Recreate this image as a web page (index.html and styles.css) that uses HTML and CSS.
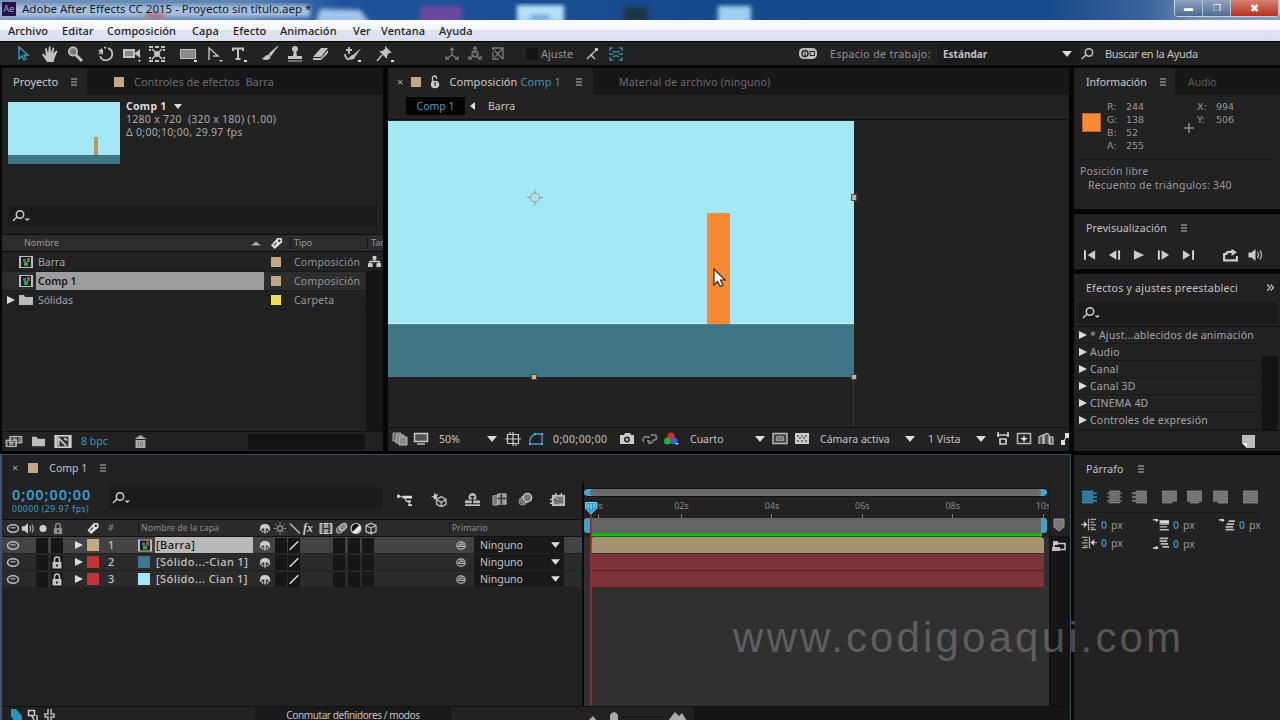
FILE: index.html
```html
<!DOCTYPE html>
<html lang="es">
<head>
  <meta charset="UTF-8">
  <title>Adobe After Effects CC 2015</title>
  <link rel="stylesheet" href="styles.css">
</head>
<body>
  <!-- Icons -->
  <svg width="0" height="0" class="sprite">
    <symbol id="arrow" viewBox="0 0 18 18"><path d="M5 2v12l3-3 2 4 2-1-2-4h4z" fill="none" stroke="#3d9fd0" stroke-width="1.3"/></symbol>
    <symbol id="hand" viewBox="0 0 18 18"><path d="M6 17 1 9.500l1.200-1 2.800 2.500L4 3.500l1.500-.5 1.500 5L8 1.500h1.500L10 8l1.800-5.500 1.500.5-1 5.800 3-3.300 1.200.8L14 12l-1.500 5z" fill="currentColor"/></symbol>
    <symbol id="mag" viewBox="0 0 18 18"><circle cx="7" cy="6.500" r="4.200" fill="#777" stroke="currentColor" stroke-width="1.700"/><path d="m10 10 6 6" stroke="currentColor" stroke-width="3"/></symbol>
    <symbol id="rotate" viewBox="0 0 18 18"><circle cx="9" cy="9" r="6.300" fill="none" stroke="currentColor" stroke-width="1.800" stroke-dasharray="17 2 2 2 2 2 2 2"/><path d="M1 5h5v5z" fill="currentColor"/></symbol>
    <symbol id="camera" viewBox="0 0 18 18"><path d="M0 4h12v9H0zm12 4 5-4v9l-5-4z" fill="currentColor"/><path d="M2 6h8v5H2z" fill="#888"/><path d="M15 15h3l-1.500 2z" fill="#ddd"/></symbol>
    <symbol id="behind" viewBox="0 0 18 18"><path d="M1 2h4M7 2h4M13 2h4M1 16h4M7 16h4M13 16h4M2 4v2M16 4v2M2 12v2M16 12v2" stroke="currentColor" stroke-width="2"/><path d="m4 4 3 3m7-3-3 3M4 14l3-3m7 3-3-3" stroke="currentColor" stroke-width="1.500"/><circle cx="9" cy="9" r="3" fill="currentColor"/></symbol>
    <symbol id="rect" viewBox="0 0 18 18"><path d="M1.500 4.500h15v9h-15z" fill="#888" stroke="currentColor"/><path d="M15 15h3v2h-3z" fill="#ddd"/></symbol>
    <symbol id="pen" viewBox="0 0 18 18"><path d="M4 15V3l9 8-5 0" fill="none" stroke="currentColor" stroke-width="1.400"/><path d="M14 15h4l-2 2z" fill="#ddd"/></symbol>
    <symbol id="type" viewBox="0 0 18 18"><path d="M4 6V3.500h10V6M9 4v10M6.500 14h5" fill="none" stroke="currentColor" stroke-width="2"/><path d="M15 15h3v2h-3z" fill="#ddd"/></symbol>
    <symbol id="brush" viewBox="0 0 18 18"><path d="m17 1-9 8 1.500 2z" fill="currentColor" stroke="currentColor"/><path d="M8 10c-3-1-4 2-7 4 4 2 9 1 8.500-2.500z" fill="currentColor"/></symbol>
    <symbol id="stamp" viewBox="0 0 18 18"><circle cx="9" cy="4" r="3" fill="currentColor"/><path d="M8 6h2l1 5h5v3H2v-3h5z" fill="currentColor"/><path d="M2 16h14" stroke="currentColor"/></symbol>
    <symbol id="eraser" viewBox="0 0 18 18"><path d="m1 12 8-9h7l-7 9zM1 13h8l7-8v3l-7 7H1z" fill="currentColor"/></symbol>
    <symbol id="roto" viewBox="0 0 18 18"><path d="m18 3-8 7c-2 0-3 2-5 4 3 1 6 1 7-2z" fill="currentColor"/><path d="M6 2v7M3 5h6M2 9c0 4 2 5 4 6" fill="none" stroke="currentColor" stroke-width="1.800"/><path d="M15 15h3v2h-3z" fill="#ddd"/></symbol>
    <symbol id="pin" viewBox="0 0 18 18"><path d="m9 1 7 7-3 0-2 3v3l-8-8h3l3-2z" fill="currentColor"/><path d="m6 10-5 6" stroke="currentColor" stroke-width="1.500"/><path d="M15 15h3v2h-3z" fill="#ddd"/></symbol>
    <symbol id="axis" viewBox="0 0 18 18"><path d="M9 10V3M9 10l-6 4M9 10l6 4M7 5l2-2 2 2M3 11v3h3M15 11v3h-3" fill="none" stroke="currentColor" stroke-width="1.400"/></symbol>
    <symbol id="axis2" viewBox="0 0 18 18"><path d="M9 9V2M8 10l-5 4M10 10l5 4M7 4l2-2 2 2M3 11v3h3M15 11v3h-3" fill="none" stroke="currentColor" stroke-width="1.400"/><circle cx="9" cy="9" r="3" fill="none" stroke="currentColor" stroke-width="1.500"/></symbol>
    <symbol id="axis3" viewBox="0 0 18 18"><path d="M3 3h11v11M3 3l11 11M14 3 6 12M4 7v7h6" fill="none" stroke="currentColor" stroke-width="1.400"/></symbol>
    <symbol id="snap" viewBox="0 0 18 18"><path d="m4 14 4-4 4 4M8 10l5-5" fill="none" stroke="currentColor" stroke-width="1.400"/><path d="M12 3h3v3h-3z" fill="currentColor"/></symbol>
    <symbol id="corners" viewBox="0 0 18 18"><path d="M3 6V3h3M12 3h3v3M3 12v3h3M15 12v3h-3M6 6l1 1h4l1-1M6 12l1-1h4l1 1M2 9h4M12 9h4" fill="none" stroke="currentColor" stroke-width="1.300"/></symbol>
    <symbol id="cloud" viewBox="0 0 18 14"><rect y="1" width="18" height="11" rx="4.500" fill="#bbb"/><circle cx="6" cy="6.500" r="3" fill="none" stroke="#222" stroke-width="1.300"/><path d="M11 4.500h4.500v4H11zM6 5v4" fill="none" stroke="#222"/></symbol>
    <symbol id="search" viewBox="0 0 18 14"><circle cx="9" cy="5.500" r="3.700" fill="none" stroke="currentColor" stroke-width="1.500"/><path d="m6 8-4.500 4" stroke="currentColor" stroke-width="1.500"/></symbol>
    <symbol id="searchm" viewBox="0 0 18 14"><circle cx="8" cy="5.500" r="3.700" fill="none" stroke="currentColor" stroke-width="1.500"/><path d="M5 8 1 12" stroke="currentColor" stroke-width="1.500"/><path d="M12.500 9.500H18l-2.700 2.500z" fill="currentColor"/></symbol>
    <symbol id="down" viewBox="0 0 10 6"><path d="M0 0h10L5 6z" fill="#ddd"/></symbol>
    <symbol id="right" viewBox="0 0 8 8"><path d="M0 0v8l8-4z" fill="#ddd"/></symbol>
    <symbol id="menu" viewBox="0 0 8 8"><path d="M1 1h6M1 4h6M1 7h6" stroke="#bbb" stroke-width="1.200"/></symbol>
    <symbol id="padlock" viewBox="0 0 12 14"><path d="M1.500 6.500h9V13h-9z" fill="currentColor"/><path d="M3.500 7V4a2.300 2.300 0 0 1 5 0v3" fill="none" stroke="currentColor" stroke-width="1.500"/><path d="M5 9h2v2H5z" fill="#222"/></symbol>
    <symbol id="unlock" viewBox="0 0 12 14"><ellipse cx="6" cy="9.500" rx="4.200" ry="3.800" fill="currentColor"/><path d="M3.500 8V3a2 2 0 0 1 4 0v1" fill="none" stroke="currentColor" stroke-width="1.300"/><path d="M5.500 7h1.200v4H5.500z" fill="#222"/></symbol>
    <symbol id="tag" viewBox="0 0 14 14"><path d="m1 9 7-8h4l1 1v4l-8 7z" fill="#ddd"/><circle cx="10" cy="4" r="1.300" fill="#222"/><path d="m4 9 3-3" stroke="#333" stroke-width="1.200"/></symbol>
    <symbol id="comp" viewBox="0 0 14 12"><path d="M0 0h14v12H0z" fill="#bbb"/><path d="M2 1h10v10H2z" fill="#18201c"/><path d="M4 3h3v3H4z" fill="#3572b4"/><path d="M8 2h3v4H8z" fill="#b5533a"/><path d="M5 6h4v4H5z" fill="#3c9f43"/></symbol>
    <symbol id="folder" viewBox="0 0 14 12"><path d="M0 1h5l1 2h8v8H0z" fill="#bbb"/></symbol>
    <symbol id="tree" viewBox="0 0 14 14"><path d="M5 1h4v4H5zM0 9h5v4H0zM9 9h5v4H9z" fill="#ccc"/><path d="M7 4v3M2 10V7h10v3" fill="none" stroke="#ccc" stroke-width="1.500"/></symbol>
    <symbol id="footage" viewBox="0 0 18 14"><path d="M4.500 1.500h13v7h-13zM.500 5.500h11v7H.500z" fill="#777" stroke="#ccc"/><path d="M3 7v5M9 7v5M7 2v4M13 2v6" stroke="#222"/></symbol>
    <symbol id="newcomp" viewBox="0 0 16 12"><path d="M0 0h16v12H0z" fill="#ccc"/><path d="M3 1.500h10v9H3z" fill="#333"/><path d="M4 10V3l7 7M9 3l3 2" stroke="#ccc" fill="none" stroke-width="1.500"/></symbol>
    <symbol id="trash" viewBox="0 0 12 13"><path d="M1 5h10v8H1zM0 4h12L6 0z" fill="#aaa"/><path d="M4 6v6M6 6v6M8 6v6" stroke="#777" stroke-width=".8"/></symbol>
    <symbol id="eye" viewBox="0 0 14 12"><ellipse cx="7" cy="6" rx="5.500" ry="3.700" fill="none" stroke="#bbb" stroke-width="1.600"/><path d="M4.500 4.500h5v1.500h-5z" fill="#999"/></symbol>
    <symbol id="speaker" viewBox="0 0 16 14"><path d="M1 4.500h3L8 1v12L4 9.500H1z" fill="#ccc"/><path d="M10 4q2 3 0 6M12.500 2.500q3 4.500 0 9" fill="none" stroke="#aaa" stroke-width="1.400"/></symbol>
    <symbol id="dot" viewBox="0 0 14 12"><circle cx="7" cy="6" r="3.500" fill="#ccc"/></symbol>
    <symbol id="shy" viewBox="0 0 14 12"><path d="M2 6q0-4.500 5-4.500T12 6z" fill="#ccc"/><path d="M7 5v6M4 5l-2 3M10 5l2 3M4.500 8v2M9.500 8v2" stroke="#ccc" stroke-width="1.500"/></symbol>
    <symbol id="sun" viewBox="0 0 14 12"><circle cx="7" cy="6" r="2.600" fill="none" stroke="#999" stroke-width="1.300"/><path d="M7 0v2M7 10v2M1 6h2M11 6h2M3 2l1 1M11 2l-1 1M3 10l1-1M11 10l-1-1" stroke="#999"/></symbol>
    <symbol id="back" viewBox="0 0 14 12"><path d="m2 1 10 10" stroke="#bbb" stroke-width="1.500"/></symbol>
    <symbol id="slash" viewBox="0 0 14 14"><path d="M2 12 12 2" stroke="#ddd" stroke-width="1.700"/></symbol>
    <symbol id="film" viewBox="0 0 14 12"><path d="M1 1h12v10H1z" fill="#999" stroke="#ccc"/><path d="M4 1v10M10 1v10M4 6h6" stroke="#222" stroke-width="1.200"/></symbol>
    <symbol id="rings" viewBox="0 0 14 12"><ellipse cx="6" cy="7" rx="4" ry="3" transform="rotate(-40 6 7)" fill="#666" stroke="#aaa"/><ellipse cx="9" cy="4.500" rx="4" ry="3" transform="rotate(-40 9 4.500)" fill="#888" stroke="#ccc"/></symbol>
    <symbol id="half" viewBox="0 0 14 12"><circle cx="7" cy="6" r="5" fill="#111" stroke="#ccc" stroke-width="1.200"/><path d="M3.500 9.500a5 5 0 0 0 7-7z" fill="#eee"/></symbol>
    <symbol id="cube" viewBox="0 0 14 12"><path d="M7 .8 12 3v6L7 11.200 2 9V3zM2 3l5 2.500L12 3M7 5.500v6" fill="none" stroke="#bbb" stroke-width="1.300"/></symbol>
    <symbol id="whip" viewBox="0 0 14 14"><ellipse cx="7" cy="7" rx="4.500" ry="4" fill="none" stroke="#bbb" stroke-width="1.300"/><path d="M4 8q2-4 6-2M5 8h6" fill="none" stroke="#bbb" stroke-width="1.300"/></symbol>
    <symbol id="layers" viewBox="0 0 16 14"><path d="M1 1h8v8H1z" fill="#666" stroke="#aaa"/><path d="M4 3h8v8H4z" fill="#777" stroke="#bbb"/><path d="M7 5h8v8H7z" fill="#888" stroke="#bbb"/></symbol>
    <symbol id="monitor" viewBox="0 0 16 14"><path d="M1.500 1.500h13v8h-13z" fill="#555" stroke="#ccc" stroke-width="1.400"/><path d="M4 12h8" stroke="#bbb" stroke-width="1.500"/></symbol>
    <symbol id="guides" viewBox="0 0 16 14"><path d="M2.500 2.500h11v9h-11zM8 0v14M0 7h16M5 0v3M11 11v3" fill="none" stroke="#ccc" stroke-width="1.200"/></symbol>
    <symbol id="mask" viewBox="0 0 16 14"><path d="M2 12V8q1-5 6-6h6v10z" fill="none" stroke="#3d9fd0" stroke-width="1.300"/><path d="M1 11h2v2H1zM6 1h2v2H6zM13 1h2v2h-2zM13 11h2v2h-2z" fill="#4bb0df"/></symbol>
    <symbol id="photo" viewBox="0 0 16 14"><path d="M1 3h4l1-2h5l1 2h3v9H1z" fill="#ccc"/><circle cx="8" cy="7.500" r="3" fill="#222"/><circle cx="8" cy="7.500" r="1.500" fill="#bbb"/></symbol>
    <symbol id="person" viewBox="0 0 16 14"><path d="M2 10a3 3 0 0 1 3-5h3m0 4H5M9 3h3a2 2 0 0 1 0 5l-3 3H6" fill="none" stroke="#777" stroke-width="2"/></symbol>
    <symbol id="rgb" viewBox="0 0 16 14"><circle cx="8" cy="4" r="3.500" fill="#e02828"/><circle cx="4.500" cy="9" r="3.500" fill="#30ad37"/><circle cx="11" cy="9" r="3.500" fill="#375fe0"/><path d="M12 11h4l-2 2z" fill="#ccc"/></symbol>
    <symbol id="region" viewBox="0 0 16 14"><path d="M1 1.500h14v10H1z" fill="#444" stroke="#bbb" stroke-width="1.400"/><path d="M4.500 4.500h7v4h-7z" fill="#777" stroke="#999"/></symbol>
    <symbol id="checker" viewBox="0 0 16 14"><path d="M1 1h14v11H1z" fill="#ccc"/><path d="M3 3h2v2H3zM7 3h2v2H7zM11 3h2v2h-2zM5 5h2v2H5zM9 5h2v2H9zM3 8h2v2H3zM7 8h2v2H7zM11 8h2v2h-2z" fill="#777"/></symbol>
    <symbol id="aspect" viewBox="0 0 16 14"><path d="M2 3h12M3 0v5M13 0v5M5 7h6v5H5z" stroke="#ccc" stroke-width="1.700" fill="none"/></symbol>
    <symbol id="fast" viewBox="0 0 16 14"><path d="M1.500 1.500h13v10h-13z" fill="none" stroke="#bbb" stroke-width="1.500"/><path d="m8 3 1 2.500 3 1-3 1.500-1 3-1-3-3-1.500 3-1z" fill="#ddd"/></symbol>
    <symbol id="buildings" viewBox="0 0 16 14"><path d="M1 12V5l4-2v9M6 12V3q3-3 5 0v9M12 12V5q3-1 3 1v6z" fill="#555" stroke="#bbb" stroke-width="1.300"/></symbol>
    <symbol id="flow" viewBox="0 0 16 14"><path d="M5 1h5v5H5zM1 8h4v5H1z" fill="#ddd"/><path d="M3 9 8 4" stroke="#ddd"/></symbol>
    <symbol id="mini" viewBox="0 0 18 16"><path d="M1 3h3v3H1zM7 4h10v3H7zM12 9h4v2h-4zM13 13h4v2h-4z" fill="#ddd"/><path d="M3 5h6l2 5h3v4" fill="none" stroke="#ccc" stroke-width="1.200"/></symbol>
    <symbol id="draft" viewBox="0 0 18 16"><path d="m5 0 1 3 3-1-2 3 2 2H6L5 9 4 6 1 5l3-1z" fill="#ccc"/><path d="m12 5 5 3v5l-5 3-5-3V8zM7 8l5 3 5-3M12 11v4" fill="none" stroke="#bbb" stroke-width="1.500"/></symbol>
    <symbol id="hide" viewBox="0 0 18 16"><path d="M5 8q-1-7 4-7t4 7zM1 9h16v3H1zM1 13h16v2H1z" fill="#bbb"/><path d="M9 4v9M7 5h4" stroke="#222" stroke-width="1.500"/></symbol>
    <symbol id="blend" viewBox="0 0 18 16"><path d="M2 4h5v10H2z" fill="#777" stroke="#aaa"/><path d="M7 2h9v11H7z" fill="#999" stroke="#bbb"/><path d="M11 2v11M7 7h9" stroke="#333" stroke-width="1.500"/></symbol>
    <symbol id="blur" viewBox="0 0 18 16"><circle cx="6" cy="10" r="4" fill="#555" stroke="#999"/><circle cx="8" cy="8" r="4" fill="#555" stroke="#aaa"/><circle cx="11" cy="6" r="4.500" fill="#777" stroke="#ccc" stroke-width="1.500"/></symbol>
    <symbol id="graph" viewBox="0 0 18 16"><path d="M2 3h14v12H2z" fill="#bbb"/><path d="M4 5h10v8H4z" fill="#777"/><path d="m3 5 11 8M6 1v3M12 1v3M0 8h3M0 12h3" stroke="#ccc" stroke-width="1.500"/><path d="m4 7 10 5" stroke="#222"/></symbol>
    <symbol id="first" viewBox="0 0 14 12"><path d="M1 1v10" stroke="#ddd" stroke-width="2"/><path d="M12 1v10L4 6z" fill="#ccc"/></symbol>
    <symbol id="prev" viewBox="0 0 14 12"><path d="M12 1v10" stroke="#ddd" stroke-width="2"/><path d="M9 1v10L1 6z" fill="#ccc"/></symbol>
    <symbol id="play" viewBox="0 0 14 12"><path d="M1 1v10l11-5z" fill="#ccc"/></symbol>
    <symbol id="loop" viewBox="0 0 16 12"><path d="M5 5H2v6h12V7M4 5q0-2 3-2h4" fill="none" stroke="#ccc" stroke-width="2"/><path d="M9 0v7l5-3.500z" fill="#ccc"/></symbol>
    <symbol id="al" viewBox="0 0 16 14"><path d="M0 0h12v2h4v2h-4v2h4v2h-4v2h4v2h-4v2H0z" fill="currentColor" opacity=".55"/><path d="M0 1h12M0 3h16M0 5h12M0 7h16M0 9h12M0 11h16M0 13h12" stroke="currentColor"/></symbol>
    <symbol id="ac" viewBox="0 0 16 14"><path d="M2 0h12v14H2z" fill="currentColor" opacity=".45"/><path d="M2 1h12M0 3h16M3 5h10M0 7h16M3 9h10M0 11h16M2 13h12" stroke="currentColor"/></symbol>
    <symbol id="aj" viewBox="0 0 16 14"><path d="M0 0h16v12h-5v2H0z" fill="currentColor" opacity=".6"/><path d="M0 1h16M0 3h16M0 5h16M0 7h16M0 9h16M0 11h16M0 13h11" stroke="currentColor"/></symbol>
    <symbol id="jc" viewBox="0 0 16 14"><path d="M0 0h16v12h-3v2H3v-2H0z" fill="currentColor" opacity=".6"/><path d="M0 1h16M0 3h16M0 5h16M0 7h16M0 9h16M0 11h16M3 13h10" stroke="currentColor"/></symbol>
    <symbol id="jf" viewBox="0 0 16 14"><path d="M0 0h16v14H0z" fill="currentColor" opacity=".6"/><path d="M0 1h16M0 3h16M0 5h16M0 7h16M0 9h16M0 11h16M0 13h16" stroke="currentColor"/></symbol>
    <symbol id="indent" viewBox="0 0 17 13"><path d="M0 6.500h6M10 1h6M10 4h4M10 7h6M10 10h4M10 12h6M8 0v13" stroke="#aaa" stroke-width="1.300"/><path d="m3 3 4 3.500L3 10z" fill="#ccc"/></symbol>
    <symbol id="before" viewBox="0 0 17 13"><path d="M0 1.500h5M7 6h10M7 9h8M7 12h10" stroke="#bbb" stroke-width="1.500"/><path d="M7 2h10v3H7z" fill="#ddd"/><path d="m3 0 3 2-3 2z" fill="#ddd"/></symbol>
    <symbol id="firstline" viewBox="0 0 17 13"><path d="M0 1.500h5M10 3h7M8 6h8M7 9h8M7 12h9" stroke="#bbb" stroke-width="1.800"/><path d="m3 0 3 2-3 2z" fill="#ddd"/></symbol>
  </svg>

  <header class="titlebar">
    <svg class="desktop" width="1280" height="20">
      <g filter="url(#soft)">
        <path d="M0 5h310v12H0z" fill="#a9c0dd"/>
        <path d="m320 9 40 1 10 13h-54z" fill="#a5c6e8"/>
        <path d="M145 12h20v8h-20z" fill="#a97f93"/>
        <path d="M420 6h42v18h-42z" fill="#6b489f"/>
        <path d="M517 5h47v18h-47z" fill="#b5e0f8"/>
        <path d="M624 7h24v15h-24z" fill="#1c3544"/>
        <path d="M718 6h33v18h-33z" fill="#9ed0ef"/>
        <path d="M530 15h20v5h-20z" fill="#5ba4d7"/>
      </g>
      <defs><filter id="soft"><feGaussianBlur stdDeviation="2"/></filter></defs>
    </svg>
    <span class="app-icon">Ae</span>
    <span class="app-title">Adobe After Effects CC 2015 - Proyecto sin título.aep *</span>
    <div class="window-buttons"><span>▬</span><span>❐</span><span class="close">✖</span></div>
  </header>

  <nav class="menubar">
    <span>Archivo</span><span>Editar</span><span>Composición</span><span>Capa</span><span>Efecto</span><span>Animación</span><span>Ver</span><span>Ventana</span><span>Ayuda</span>
  </nav>

  <div class="toolbar">
    <svg><use href="#arrow"/></svg><svg><use href="#hand"/></svg><svg><use href="#mag"/></svg>
    <svg><use href="#rotate"/></svg><svg><use href="#camera"/></svg><svg><use href="#behind"/></svg>
    <svg><use href="#rect"/></svg><svg><use href="#pen"/></svg><svg><use href="#type"/></svg>
    <svg><use href="#brush"/></svg><svg><use href="#stamp"/></svg><svg><use href="#eraser"/></svg>
    <svg><use href="#roto"/></svg><svg><use href="#pin"/></svg>
    <svg class="dim"><use href="#axis"/></svg><svg class="dim"><use href="#axis2"/></svg><svg class="dim"><use href="#axis3"/></svg>
    <i class="checkbox"></i><span class="muted">Ajuste</span>
    <svg><use href="#snap"/></svg><svg class="blue"><use href="#corners"/></svg>
    <svg class="low"><use href="#cloud"/></svg><span class="muted workspace">Espacio de trabajo:</span>
    <div class="select"><b>Estándar</b><svg class="down"><use href="#down"/></svg></div>
    <svg class="low"><use href="#search"/></svg><span class="help">Buscar en la Ayuda</span>
  </div>

  <main>
    <div class="main-left">
      <div class="upper">
        <!-- Project panel -->
        <section class="panel project">
          <div class="tabs">
            <div class="tab active tab-project"><span>Proyecto</span><svg class="menu"><use href="#menu"/></svg></div>
            <div class="tab tab-effects"><i class="swatch sand"></i><span>Controles de efectos&nbsp; Barra</span></div>
          </div>
          <div class="preview">
            <div class="thumb"><i class="thumb-bar"></i><i class="thumb-floor"></i></div>
            <div class="preview-text">
              <p class="preview-name"><b>Comp 1</b> <svg><use href="#down"/></svg></p>
              <p>1280 x 720&nbsp; (320 x 180) (1.00)</p>
              <p>Δ 0;00;10;00, 29.97 fps</p>
            </div>
          </div>
          <div class="searchbox project-search"><svg><use href="#searchm"/></svg></div>
          <div class="asset-head">
            <span>Nombre</span><svg class="sort" viewBox="0 0 12 5"><path d="M0 5h12L6 0z" fill="#aaa"/></svg>
            <svg class="tag"><use href="#tag"/></svg><span class="cell">Tipo</span><span class="cell">Tar</span>
          </div>
          <div class="asset-wrap">
            <div class="assets">
              <div class="asset"><i></i><svg><use href="#comp"/></svg><span>Barra</span><i class="swatch sand"></i><span class="kind">Composición</span></div>
              <div class="asset selected"><i></i><svg><use href="#comp"/></svg><span class="name">Comp 1</span><i class="swatch sand"></i><span class="kind">Composición</span></div>
              <div class="asset"><svg class="expand"><use href="#right"/></svg><svg><use href="#folder"/></svg><span>Sólidas</span><i class="swatch yellow"></i><span class="kind">Carpeta</span></div>
            </div>
            <div class="asset-scroll"><svg><use href="#tree"/></svg></div>
          </div>
          <div class="project-foot">
            <svg class="wide"><use href="#footage"/></svg><svg><use href="#folder"/></svg><svg class="wide"><use href="#newcomp"/></svg>
            <span>8 bpc</span><svg><use href="#trash"/></svg><div class="hscroll"></div>
          </div>
        </section>

        <!-- Composition viewer -->
        <section class="panel composition">
          <div class="tabs">
            <div class="tab active tab-comp"><span class="x">×</span><i class="swatch sand"></i><svg class="lock"><use href="#unlock"/></svg><span>Composición <em>Comp 1</em></span><svg class="menu"><use href="#menu"/></svg></div>
            <div class="tab tab-footage"><span>Material de archivo (ninguno)</span></div>
          </div>
          <div class="crumbs"><span class="crumb">Comp 1</span><svg viewBox="0 0 5 8"><path d="M5 0v8L0 4z" fill="#ddd"/></svg><span>Barra</span></div>
          <div class="viewer">
            <svg width="681" height="307">
              <path d="M0 1h466v203H0z" fill="#a4e8f5"/>
              <path d="M0 203h466v1.500H0z" fill="#bff5fa"/>
              <path d="M0 204.500h466V257H0z" fill="#3f7686"/>
              <path d="M319 93h23v111h-23z" fill="#f68a32"/>
              <path d="M465.500 258v49" stroke="#62262b"/>
              <g fill="none" stroke="#8c9b97"><circle cx="147" cy="77.500" r="4.500"/><path d="M139 77.500h4M151 77.500h4M147 69.500v4M147 81.500v4"/></g>
              <circle cx="147" cy="77.500" r="2.500" fill="#c7d6d3"/>
              <g fill="#c1b39c" stroke="#4b4a42"><path d="M463.500 74.500h5v6h-5zM463.500 254.500h5v5h-5zM143.500 254.500h5v5h-5z"/></g>
              <path d="M326 149v16l3.500-3.500 3 5 2.500-1.500-2.500-5h4.500z" fill="#fff" stroke="#3a2318" stroke-width="1.200"/>
            </svg>
          </div>
          <div class="comp-foot">
            <svg><use href="#layers"/></svg><svg><use href="#monitor"/></svg><span>50%</span><svg class="down"><use href="#down"/></svg>
            <svg><use href="#guides"/></svg><svg><use href="#mask"/></svg><span class="foot-time">0;00;00;00</span>
            <svg><use href="#photo"/></svg><svg><use href="#person"/></svg><svg><use href="#rgb"/></svg>
            <span>Cuarto</span><svg class="down"><use href="#down"/></svg><svg><use href="#region"/></svg><svg><use href="#checker"/></svg>
            <span>Cámara activa</span><svg class="down"><use href="#down"/></svg><span>1 Vista</span><svg class="down"><use href="#down"/></svg>
            <svg><use href="#aspect"/></svg><svg><use href="#fast"/></svg><svg><use href="#buildings"/></svg><svg><use href="#flow"/></svg>
          </div>
        </section>
      </div>

      <!-- Timeline -->
      <section class="timeline">
        <div class="tl-tab"><span class="x">×</span><i class="swatch sand"></i><span>Comp 1</span><svg class="menu"><use href="#menu"/></svg></div>
        <div class="tl-body">
          <div class="tl-left">
            <div class="tl-tools">
              <div class="timecode"><b>0;00;00;00</b><small>00000 (29.97 fps)</small></div>
              <div class="searchbox tl-search"><svg><use href="#searchm"/></svg></div>
              <div class="tl-icons">
                <svg><use href="#mini"/></svg><svg><use href="#draft"/></svg><svg><use href="#hide"/></svg><svg><use href="#blend"/></svg><svg><use href="#blur"/></svg><svg><use href="#graph"/></svg>
              </div>
            </div>
            <div class="layer layer-head">
              <svg><use href="#eye"/></svg><svg><use href="#speaker"/></svg><svg><use href="#dot"/></svg><svg><use href="#padlock"/></svg>
              <i></i><svg><use href="#tag"/></svg><span class="hash">#</span><span class="head-name">Nombre de la capa</span>
              <svg><use href="#shy"/></svg><svg><use href="#sun"/></svg><svg><use href="#back"/></svg><span class="fx">fx</span>
              <svg><use href="#film"/></svg><svg><use href="#rings"/></svg><svg><use href="#half"/></svg><svg><use href="#cube"/></svg>
              <span class="head-parent">Primario</span>
            </div>
            <div class="layer current">
              <svg><use href="#eye"/></svg><i></i><i class="box"></i><i class="box"></i><svg class="expand"><use href="#right"/></svg><i class="label sand"></i><span class="num">1</span>
              <svg><use href="#comp"/></svg><span class="name">[Barra]</span><svg><use href="#shy"/></svg><i class="box"></i><svg class="box"><use href="#slash"/></svg>
              <i></i><i></i><i class="box"></i><i class="box"></i><i class="box"></i><svg class="whip"><use href="#whip"/></svg>
              <div class="parent"><span>Ninguno</span><svg><use href="#down"/></svg></div>
            </div>
            <div class="layer">
              <svg><use href="#eye"/></svg><i></i><i class="box"></i><svg class="box"><use href="#padlock"/></svg><svg class="expand"><use href="#right"/></svg><i class="label red"></i><span class="num">2</span>
              <i class="label teal"></i><span class="name">[Sólido...-Cian 1]</span><svg><use href="#shy"/></svg><i class="box"></i><svg class="box"><use href="#slash"/></svg>
              <i></i><i></i><i class="box"></i><i class="box"></i><i class="box"></i><svg class="whip"><use href="#whip"/></svg>
              <div class="parent"><span>Ninguno</span><svg><use href="#down"/></svg></div>
            </div>
            <div class="layer">
              <svg><use href="#eye"/></svg><i></i><i class="box"></i><svg class="box"><use href="#padlock"/></svg><svg class="expand"><use href="#right"/></svg><i class="label red"></i><span class="num">3</span>
              <i class="label cyan"></i><span class="name">[Sólido... Cian 1]</span><svg><use href="#shy"/></svg><i class="box"></i><svg class="box"><use href="#slash"/></svg>
              <i></i><i></i><i class="box"></i><i class="box"></i><i class="box"></i><svg class="whip"><use href="#whip"/></svg>
              <div class="parent"><span>Ninguno</span><svg><use href="#down"/></svg></div>
            </div>
          </div>
          <div class="tl-right">
            <div class="navigator"></div>
            <div class="ruler"><span class="zero">0s</span><span>02s</span><span>04s</span><span>06s</span><span>08s</span><span>10s</span></div>
            <div class="workarea"></div>
            <div class="tracks">
              <div class="track sand"></div>
              <div class="track red"></div>
              <div class="track red"></div>
            </div>
            <svg class="playhead" width="14" height="220"><path d="M7 17v203" stroke="#bb2528" stroke-width="1.500"/><path d="M1.500 5.500h11v6L7 17l-5.500-5.500z" fill="#2b9bd0" stroke="#7bd0f2"/><path d="M4 7v4M7 7v5M10 7v4" stroke="#b6e6fa"/></svg>
          </div>
          <div class="tl-side">
            <svg viewBox="0 0 12 14"><path d="M1 1h10v8l-5 4-5-4z" fill="#777" stroke="#999"/></svg>
            <svg viewBox="0 0 14 12"><path d="M1 1h5v4H1zM0 7h8v4H0z" fill="#bbb"/><path d="M2 8q-1-5 4-5M6 3.500h7v6H8" fill="none" stroke="#ccc" stroke-width="1.500"/></svg>
          </div>
        </div>
        <div class="tl-foot">
          <svg class="foot-icons" width="60" height="14"><path d="M3 2h5l6 7v5H6L3 9z" fill="#2d92bd"/><path d="M20.500 3.500h6v5h-6zM24 9l2 4M29 8v6" fill="none" stroke="#ccc" stroke-width="1.500"/><path d="M40 2v5h-3v3h3v4M43 2v5h3v3h-3v4" fill="none" stroke="#bbb" stroke-width="1.500"/></svg>
          <span class="switches">Conmutar definidores / modos</span>
          <svg class="zoomer" width="110" height="14"><path d="m4 14 5-5 4 5zM26 14V8q4-6 8 0v6zM84 14l7-9 4 4 3-3 5 8z" fill="#aaa"/><path d="M38 10h42" stroke="#151515" stroke-width="2"/></svg>
          <i class="foot-scroll"></i>
        </div>
        <div class="watermark">www.codigoaqui.com</div>
      </section>
    </div>

    <aside class="side">
      <section class="panel info">
        <div class="tabs"><div class="tab active tab-info"><span>Información</span><svg class="menu"><use href="#menu"/></svg></div><div class="tab tab-audio"><span>Audio</span></div></div>
        <div class="readout">
          <i class="color"></i>
          <dl><dt>R:</dt><dd>244</dd><dt>G:</dt><dd>138</dd><dt>B:</dt><dd>52</dd><dt>A:</dt><dd>255</dd></dl>
          <svg class="plus" viewBox="0 0 10 10"><path d="M5 0v10M0 5h10" stroke="#bbb"/></svg>
          <dl class="coords"><dt>X:</dt><dd>994</dd><dt>Y:</dt><dd>506</dd></dl>
        </div>
        <div class="notes"><p>Posición libre</p><p class="indent">Recuento de triángulos: 340</p></div>
      </section>
      <section class="panel transport">
        <div class="side-title"><span>Previsualización</span><svg class="menu"><use href="#menu"/></svg></div>
        <div class="buttons">
          <svg><use href="#first"/></svg><svg><use href="#prev"/></svg><svg><use href="#play"/></svg><svg class="flip"><use href="#prev"/></svg><svg class="flip"><use href="#first"/></svg><svg class="loop"><use href="#loop"/></svg><svg class="loop"><use href="#speaker"/></svg>
        </div>
      </section>
      <section class="panel effects">
        <div class="fx-title"><span>Efectos y ajustes preestableci</span><b>»</b></div>
        <div class="searchbox fx-search"><svg><use href="#searchm"/></svg></div>
        <div class="fx-wrap">
          <ul>
            <li><svg><use href="#right"/></svg>* Ajust...ablecidos de animación</li>
            <li><svg><use href="#right"/></svg>Audio</li>
            <li><svg><use href="#right"/></svg>Canal</li>
            <li><svg><use href="#right"/></svg>Canal 3D</li>
            <li><svg><use href="#right"/></svg>CINEMA 4D</li>
            <li><svg><use href="#right"/></svg>Controles de expresión</li>
          </ul>
          <div class="fx-scroll"></div>
        </div>
        <div class="fx-foot"><svg viewBox="0 0 13 13"><path d="M0 0h13v13H5L0 8z" fill="#bbb"/><path d="M0 8h5v5z" fill="#eee"/></svg></div>
      </section>
      <section class="panel paragraph">
        <div class="side-title"><span>Párrafo</span><svg class="menu"><use href="#menu"/></svg></div>
        <div class="aligns">
          <svg class="on"><use href="#al"/></svg><svg><use href="#ac"/></svg><svg class="flip"><use href="#al"/></svg><svg><use href="#aj"/></svg><svg><use href="#jc"/></svg><svg class="flip"><use href="#aj"/></svg><svg><use href="#jf"/></svg>
        </div>
        <div class="fields">
          <div><svg><use href="#indent"/></svg><em>0</em> px</div><div><svg><use href="#before"/></svg><em>0</em> px</div><div><svg><use href="#firstline"/></svg><em>0</em> px</div>
          <div class="up"><svg class="flip"><use href="#indent"/></svg><em>0</em> px</div><div><svg class="flop"><use href="#firstline"/></svg><em>0</em> px</div>
        </div>
      </section>
    </aside>
  </main>
</body>
</html>
```
FILE: styles.css
```css
* {
  box-sizing: border-box;
}
body {
  margin: 0;
  width: 1280px;
  height: 720px;
  overflow: hidden;
  background: #060606;
  color: #c4c4c4;
  font-family: "Noto Sans", "Open Sans", sans-serif;
  font-size: 11px;
  line-height: 14px;
  white-space: nowrap;
}
p, ul, dl, dd {
  margin: 0;
  padding: 0;
}
svg {
  display: block;
  flex: none;
}
em {
  font-style: normal;
  color: #3f93bd;
}
.sprite {
  position: absolute;
}
.flip {
  transform: scaleX(-1);
}
.flop {
  transform: scaleY(-1);
}
.swatch {
  width: 10px;
  height: 10px;
  flex: none;
}
.sand {
  background: #c2a883;
}
.yellow {
  background: #efe04c;
}
.red {
  background: #c23434;
}
.teal {
  background: #42798a;
}
.cyan {
  background: #a0e8f5;
}
.menu {
  width: 8px;
  height: 8px;
}
.down {
  width: 10px;
  height: 6px;
}

/* Title bar */
.titlebar {
  position: relative;
  height: 20px;
  display: flex;
  align-items: center;
  overflow: hidden;
  background: linear-gradient(90deg, #7895bd 0, #5a82b4 250px, #1e539b 340px, #17498d 700px, #184b8d 1050px, #3c659b 1150px, #7892b5 1200px, #899fbd 1280px);
}
.desktop {
  position: absolute;
  left: 0;
  top: 0;
}
.app-icon {
  position: relative;
  width: 14px;
  height: 14px;
  margin: 0 6px 2px 2px;
  background: #24104a;
  color: #b79de8;
  font-size: 9px;
  line-height: 13px;
  text-align: center;
}
.app-title {
  position: relative;
  color: #10192b;
  font-size: 11.500px;
  margin-bottom: 2px;
  flex: 1;
}
.window-buttons {
  position: relative;
  display: flex;
  width: 106px;
  height: 18px;
  margin: -4px 0 0;
  border: 1px solid #c3d1e2;
  border-radius: 0 0 4px 4px;
  overflow: hidden;
}
.window-buttons span {
  width: 28px;
  background: linear-gradient(#8fa6c3, #4d6a92);
  border-right: 1px solid #afbfd4;
  color: #fff;
  font-size: 9px;
  line-height: 16px;
  text-align: center;
}
.window-buttons .close {
  flex: 1;
  background: linear-gradient(#d98070, #b33220);
  font-size: 11px;
}

.menubar {
  height: 21px;
  display: grid;
  grid-template-columns: 54px 45px 85px 41px 47px 73px 28px 58px auto;
  align-items: center;
  padding-left: 8px;
  background: linear-gradient(#fdfdff 0, #f4f5fc 45%, #dfe3f2 50%, #dadff0 100%);
  color: #1c1c1c;
  font-weight: 500;
  letter-spacing: .1px;
}

/* Tools */
.toolbar {
  height: 24px;
  margin-bottom: 3px;
  padding: 1px 0 0 14px;
  border-top: 1px solid #000;
  display: grid;
  grid-template-columns: 27px 25px 31px 26px 25px 31px 26px 24px 32px 25px 26px 31px 33px 67px 23px 23px 37px 15px 42px 24px 192px 31px 107px 143px 25px auto;
  align-items: center;
  background: #222;
}
.toolbar > svg {
  width: 18px;
  height: 18px;
  color: #c2c2c2;
}
.toolbar > .dim {
  color: #777;
}
.toolbar > .blue {
  color: #318bb5;
}
.toolbar > .low {
  height: 14px;
}
.muted {
  color: #929292;
}
.workspace {
  font-size: 10.500px;
  letter-spacing: .4px;
}
.checkbox {
  width: 12px;
  height: 12px;
  background: #151515;
}
.select {
  height: 20px;
  padding: 0 8px 0 6px;
  display: flex;
  align-items: center;
  justify-content: space-between;
  background: #1b1b1b;
  font-size: 10px;
}
.help {
  letter-spacing: -.3px;
}

main {
  display: flex;
  height: 652px;
}
.main-left {
  width: 1071px;
  margin-right: 3px;
}
.upper {
  display: flex;
  height: 383px;
  margin-bottom: 3px;
}
.panel {
  background: #222;
}
.tabs {
  display: flex;
  height: 27px;
  background: #171717;
}
.tab {
  display: flex;
  align-items: center;
  color: #6c6c6c;
}
.tab.active {
  background: #222;
  color: #ccc;
}
.x {
  color: #aaa;
}
.searchbox {
  background: #1b1b1b;
  color: #ccc;
  display: flex;
  align-items: center;
}
.searchbox svg {
  width: 18px;
  height: 14px;
}

/* Project */
.project {
  width: 381px;
  margin: 0 5px 0 2px;
}
.tab-project {
  width: 85px;
  padding-left: 11px;
  gap: 12px;
}
.tab-effects {
  padding-left: 27px;
  gap: 10px;
}
.preview {
  display: flex;
  height: 111px;
  padding: 7px 0 0 6px;
  gap: 6px;
}
.thumb {
  width: 112px;
  height: 62px;
  display: flex;
  flex-direction: column;
  justify-content: flex-end;
  background: #a4e8f5;
}
.thumb-bar {
  width: 4px;
  height: 18px;
  margin-left: 86px;
  background: #c19563;
}
.thumb-floor {
  height: 9px;
  background: #3f7686;
}
.preview-text {
  color: #aaa;
  font-size: 10.500px;
  line-height: 13px;
  letter-spacing: .28px;
  margin-top: -2px;
}
.preview-name {
  display: flex;
  align-items: center;
  gap: 7px;
  color: #ddd;
}
.preview-name svg {
  width: 8px;
  height: 5px;
}
.project-search {
  height: 20px;
  margin: 0 6px 8px 6px;
  padding-left: 4px;
}
.asset-head {
  height: 18px;
  border: 1px solid #0c0c0c;
  border-width: 1px 0;
  display: grid;
  grid-template-columns: 227px 17px 22px 77px auto;
  align-items: center;
  padding-left: 22px;
  background: #2c2c2c;
  color: #989898;
  font-size: 9px;
  overflow: hidden;
}
.asset-head .sort {
  width: 10px;
  height: 5px;
}
.asset-head .tag {
  width: 13px;
  height: 13px;
  margin-left: 2px;
}
.cell {
  line-height: 12px;
  border-left: 1px solid #161616;
  padding-left: 3px;
}
.asset-wrap {
  display: flex;
  height: 180px;
  border-bottom: 1px solid #101010;
}
.assets {
  width: 364px;
  padding-top: 1px;
}
.asset {
  height: 19px;
  display: grid;
  grid-template-columns: 17px 17px 235px 23px auto;
  align-items: center;
  border-bottom: 1px solid #1b1b1b;
  color: #a5a5a5;
  font-size: 10.500px;
}
.asset svg {
  width: 14px;
  height: 12px;
}
.asset .expand {
  width: 8px;
  height: 8px;
  margin-left: 5px;
}
.asset > span {
  padding-left: 2px;
}
.asset.selected {
  background: #2d2d2d;
}
.asset .name {
  background: #9d9d9d;
  color: #151515;
  width: 228px;
  line-height: 18px;
  font-weight: 600;
}
.asset > .kind {
  padding: 0;
  color: #959595;
  letter-spacing: .2px;
}
.asset-scroll {
  width: 17px;
  background: #141414;
}
.asset-scroll svg {
  width: 17px;
  height: 19px;
  padding: 2px 2px;
  background: #222;
}
.project-foot {
  height: 18px;
  display: flex;
  align-items: center;
  padding-left: 3px;
  color: #3f93bd;
  font-size: 10.500px;
}
.project-foot svg {
  width: 13px;
  height: 13px;
  margin-right: 9px;
}
.project-foot .wide {
  width: 18px;
}
.project-foot span {
  width: 53px;
}
.hscroll {
  margin-left: 92px;
  width: 117px;
  height: 15px;
  background: #141414;
}

/* Composition */
.composition {
  width: 681px;
}
.tab-comp {
  width: 205px;
  padding-left: 9px;
  gap: 8px;
  letter-spacing: .1px;
}
.tab-comp .menu {
  margin-left: 6px;
}
.tab-comp .lock {
  width: 12px;
  height: 14px;
}
.tab-footage {
  padding-left: 26px;
  font-size: 10.500px;
  letter-spacing: .22px;
}
.crumbs {
  height: 25px;
  display: flex;
  align-items: center;
  padding: 0 0 2px 18px;
  border-bottom: 1px solid #111;
  font-size: 10.500px;
}
.crumb {
  width: 59px;
  margin-right: 5px;
  line-height: 18px;
  text-align: center;
  background: #050505;
  color: #4a9ac0;
}
.crumbs svg {
  width: 5px;
  height: 8px;
  margin-right: 13px;
}
.viewer {
  height: 307px;
}
.comp-foot {
  height: 23px;
  border-top: 1px solid #101010;
  padding-left: 4px;
  display: grid;
  grid-template-columns: 21px 26px 48px 18px 23px 25px 66px 23px 21px 27px 65px 17px 22px 26px 85px 23px 48px 19px 21px 22px 22px auto;
  align-items: center;
  overflow: hidden;
  font-size: 10.500px;
}
.comp-foot svg {
  width: 16px;
  height: 14px;
}
.comp-foot .down {
  width: 10px;
  height: 6px;
}
.foot-time {
  letter-spacing: .4px;
}

/* Timeline */
.timeline {
  position: relative;
  height: 266px;
  border: 1px solid #3c4b66;
  border-left: 2px solid #3a5473;
  border-bottom: 0;
  background: #222;
}
.tl-tab {
  height: 28px;
  display: flex;
  align-items: center;
  gap: 8px;
  padding: 0 0 2px 10px;
  font-size: 10.500px;
}
.tl-tab .x {
  font-size: 11px;
}
.tl-tab .swatch {
  margin: 0 3px 0 2px;
}
.tl-tab .menu {
  margin-left: 4px;
}
.tl-body {
  display: flex;
  height: 223px;
}
.tl-left {
  width: 582px;
  border-right: 2px solid #0a0a0a;
}
.tl-tools {
  height: 36px;
  display: flex;
  padding: 4px 0 0 10px;
}
.timecode {
  width: 97px;
  color: #3f9bcb;
}
.timecode b {
  display: block;
  font-size: 14.500px;
  font-weight: 600;
  line-height: 15px;
  letter-spacing: .9px;
}
.timecode small {
  display: block;
  font-size: 8.500px;
  line-height: 14px;
  letter-spacing: .55px;
}
.tl-search {
  width: 273px;
  height: 22px;
  padding-left: 3px;
}
.tl-icons {
  display: grid;
  grid-template-columns: 34px 34px 27px 26px 33px 18px;
  align-items: center;
  margin-left: 14px;
  height: 24px;
}
.tl-icons svg {
  width: 17px;
  height: 15px;
}
.layer {
  height: 17px;
  display: grid;
  grid-template-columns: 15px 15px 15px 21px 15px 17px 34px 17px 103px 17px 13px 15px 15px 15px 15px 14px 91px 21px 108px;
  align-items: center;
  padding-left: 4px;
  border-bottom: 1px solid #222;
  background: #2b2b2b;
  font-size: 11px;
}
.layer svg {
  width: 14px;
  height: 13px;
}
.layer.current {
  background: #434343;
}
.layer-head {
  height: 18px;
  grid-template-columns: 15px 15px 15px 21px 14px 18px 34px 120px 15px 15px 15px 16px 15px 15px 15px 85px 120px;
  border-top: 1px solid #0b0b0b;
  border-bottom: 1px solid #111;
  color: #8e8e8e;
  font-size: 9px;
}
.hash {
  padding-left: 4px;
}
.fx {
  font: italic bold 12px "Liberation Serif", serif;
  color: #ccc;
}
.head-name,
.head-parent {
  border-left: 1px solid #151515;
  padding-left: 2px;
  line-height: 12px;
  font-size: 8.800px;
}
.layer .box {
  width: 12px;
  height: 15px;
  background: #171717;
}
.layer .expand {
  width: 8px;
  height: 8px;
  margin-left: 3px;
}
.layer .label {
  width: 12px;
  height: 12px;
}
.num {
  padding-left: 4px;
  font-weight: 500;
}
.layer .name {
  width: 98px;
  padding-left: 1px;
  line-height: 16px;
  font-weight: 500;
  letter-spacing: .45px;
}
.layer.current .name {
  background: #b9b9b9;
  color: #161616;
}
.whip {
  margin-left: 1px;
}
.parent {
  width: 90px;
  height: 16px;
  padding: 0 4px 0 6px;
  display: flex;
  align-items: center;
  justify-content: space-between;
  background: #191919;
  font-size: 10.500px;
}
.parent svg {
  width: 9px;
  height: 6px;
}
.tl-right {
  position: relative;
  width: 466px;
  padding-top: 5px;
  overflow: hidden;
  border-right: 1px solid #111;
}
.navigator {
  height: 9px;
  margin-right: 2px;
  background: #6a6a6a;
  border: 1px solid #111;
  border-width: 1px 0;
  box-shadow: inset 6px 0 #45a8d4, inset -6px 0 #45a8d4;
  border-radius: 4px;
}
.ruler {
  height: 21px;
  margin-left: -38px;
  display: grid;
  grid-template-columns: repeat(6, 90.400px);
  text-align: center;
  color: #888;
  font-size: 9px;
  line-height: 17px;
}
.ruler .zero {
  padding-left: 14px;
}
.ruler span::after {
  content: "";
  display: block;
  width: 1px;
  height: 4px;
  margin: 0 auto;
  background: #777;
}
.workarea {
  height: 19px;
  margin: 0 7px 0 0;
  background: linear-gradient(#646464 0, #646464 14px, #19a51e 15px, #2caf2f 18px, #111 19px);
  border-left: 7px solid #222;
}
.workarea::before,
.workarea::after {
  content: "";
  position: absolute;
  top: 35px;
  left: 0;
  width: 6px;
  height: 15px;
  border-radius: 3px 0 0 3px;
  background: #3fa0d0;
}
.workarea::after {
  left: auto;
  right: 2px;
  transform: scaleX(-1);
}
.tracks {
  height: 170px;
  padding: 0 0 0 7px;
  background: #303030;
}
.track {
  width: 453px;
  height: 16px;
  margin-bottom: 1px;
}
.track.sand {
  background: #a4946f;
  border-radius: 4px 4px 0 0;
}
.track.red {
  background: #7c3337;
  box-shadow: 0 1px #571d24;
}
.playhead {
  position: absolute;
  left: 0;
  top: 14px;
}
.tl-side {
  flex: 1;
  padding: 35px 0 0 2px;
  background: linear-gradient(#222 53px, #151515 53px);
}
.tl-side svg {
  width: 14px;
  height: 14px;
  margin-bottom: 7px;
}
.tl-foot {
  height: 14px;
  display: flex;
  border-top: 1px solid #101010;
}
.foot-icons {
  margin: 0 187px 0 6px;
}
.switches {
  width: 196px;
  height: 14px;
  text-align: center;
  background: #191919;
  font-size: 10px;
  line-height: 17px;
  letter-spacing: -.4px;
}
.zoomer {
  margin-left: 133px;
}
.foot-scroll {
  flex: 1;
  background: #141414;
}
.watermark {
  position: absolute;
  left: 731px;
  top: 160px;
  color: rgba(155, 155, 155, .45);
  font-family: "Liberation Sans", Arial, sans-serif;
  font-size: 42px;
  line-height: 46px;
  letter-spacing: 3.150px;
}

/* Side column */
.side {
  width: 206px;
}
.info {
  height: 141px;
  margin-bottom: 5px;
}
.tab-info {
  width: 101px;
  padding-left: 12px;
  gap: 12px;
  font-size: 10.500px;
}
.tab-audio {
  padding-left: 13px;
  color: #5e5e5e;
  font-size: 10.500px;
}
.readout {
  display: flex;
  height: 64px;
  padding: 5px 0 0 8px;
  color: #999;
  font: 9.500px/13px "DejaVu Sans", sans-serif;
}
.color {
  width: 19px;
  height: 19px;
  margin: 13px 6px 0 0;
  background: #f78a33;
  border: 1px solid #b5642a;
}
.readout dl {
  display: grid;
  grid-template-columns: 19px 50px;
  align-content: start;
}
.plus {
  width: 10px;
  height: 10px;
  margin: 23px 3px 0 8px;
}
.notes {
  margin: 0 8px 0 6px;
  border-top: 1px solid #1a1a1a;
  padding-top: 4px;
  color: #999;
  font-size: 10.500px;
  letter-spacing: .2px;
}
.notes .indent {
  padding-left: 8px;
}
.transport {
  height: 55px;
  margin-bottom: 5px;
}
.side-title {
  display: flex;
  align-items: center;
  gap: 13px;
  height: 27px;
  padding-left: 12px;
  font-size: 10.500px;
  letter-spacing: .15px;
}
.buttons {
  display: grid;
  grid-template-columns: 24px 25px 24px 24px 41px 25px 18px;
  align-items: center;
  padding: 7px 0 0 10px;
}
.buttons svg {
  width: 13px;
  height: 12px;
}
.buttons .loop {
  width: 17px;
  height: 14px;
}
.effects {
  height: 177px;
  margin-bottom: 4px;
}
.fx-title {
  display: flex;
  height: 27px;
  align-items: center;
  padding-left: 12px;
  font-size: 10.500px;
  letter-spacing: .27px;
}
.fx-title span {
  width: 153px;
  overflow: hidden;
}
.fx-title b {
  padding: 0 0 3px 27px;
  font-size: 17px;
  font-weight: normal;
}
.fx-search {
  height: 21px;
  margin: 1px 3px 3px 3px;
  padding-left: 5px;
}
.fx-wrap {
  display: flex;
  height: 105px;
  border: 1px solid #101010;
  border-width: 1px 0;
}
.fx-wrap ul {
  width: 188px;
  list-style: none;
}
.fx-wrap li {
  display: flex;
  align-items: center;
  gap: 3px;
  height: 17px;
  padding-left: 5px;
  border-bottom: 1px solid #1a1a1a;
  color: #a5a5a5;
  font-size: 10.500px;
  letter-spacing: .2px;
}
.fx-wrap li svg {
  width: 8px;
  height: 8px;
}
.fx-scroll {
  width: 16px;
  background: linear-gradient(#222 29px, #141414 29px);
}
.fx-foot svg {
  width: 13px;
  height: 13px;
  margin: 4px 0 0 168px;
}
.paragraph {
  height: 265px;
}
.aligns {
  display: grid;
  grid-template-columns: 25px 25px 30px 25px 26px 30px 18px;
  height: 31px;
  align-items: center;
  margin: 0 20px 0 3px;
  padding-left: 5px;
  border-bottom: 1px solid #1a1a1a;
  color: #8c8c8c;
}
.aligns svg {
  width: 15px;
  height: 14px;
}
.aligns .on {
  color: #3a92c0;
}
.fields {
  display: grid;
  grid-template-columns: 72px 66px 60px;
  grid-auto-rows: 19px;
  padding: 2px 0 0 7px;
  color: #999;
}
.fields div {
  display: flex;
  align-items: center;
  gap: 4px;
  font-size: 10.500px;
}
.fields svg {
  width: 16px;
  height: 13px;
}
.fields em {
  color: #3a8cba;
  font-weight: 600;
}
.fields .up {
  padding-bottom: 2px;
}
```
